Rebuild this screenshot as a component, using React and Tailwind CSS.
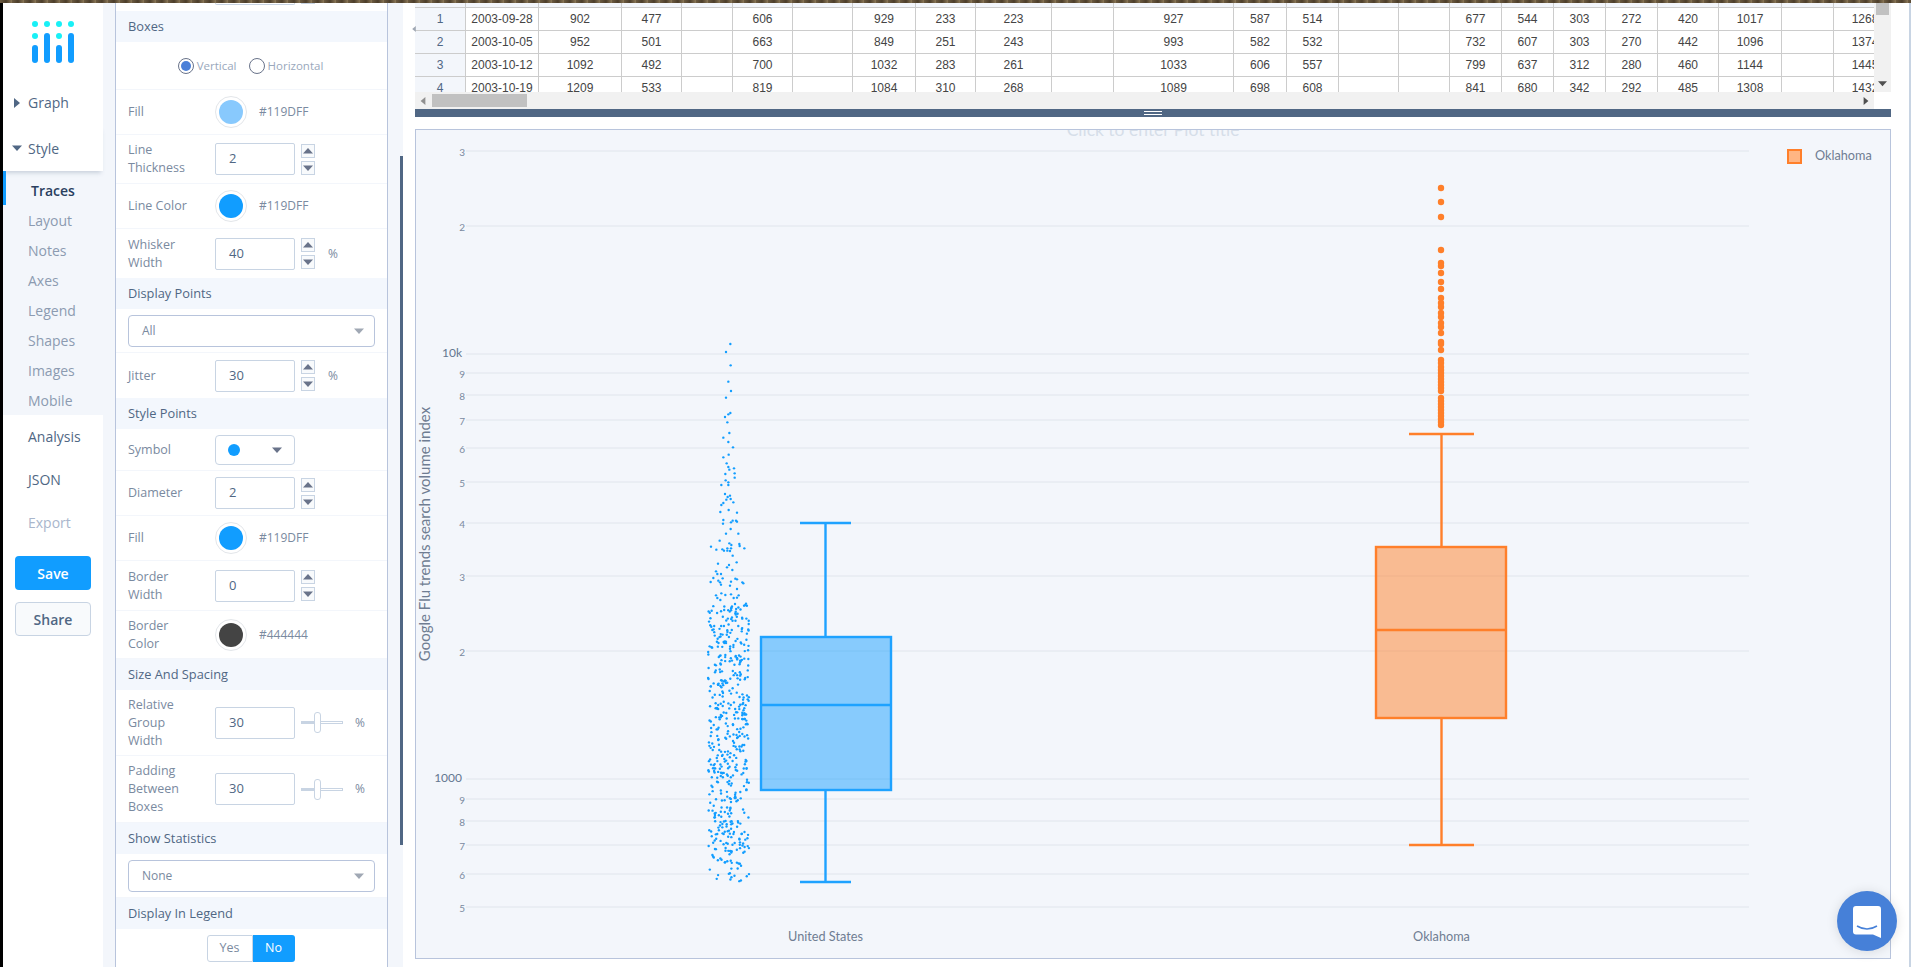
const colWidths = [
  "w-[51px]", "w-[73px]", "w-[83px]", "w-[60px]", "w-[51px]", "w-[60px]", "w-[60px]", "w-[63px]",
  "w-[60px]", "w-[76px]", "w-[62px]", "w-[120px]", "w-[53px]", "w-[52px]", "w-[60px]", "w-[51px]",
  "w-[52px]", "w-[52px]", "w-[52px]", "w-[52px]", "w-[61px]", "w-[63px]", "w-[52px]", "w-[63px]",
];

const tableRows = [
  ["1", "2003-09-28", "902", "477", "", "606", "", "929", "233", "223", "", "927", "587", "514", "", "", "677", "544", "303", "272", "420", "1017", "", "1268"],
  ["2", "2003-10-05", "952", "501", "", "663", "", "849", "251", "243", "", "993", "582", "532", "", "", "732", "607", "303", "270", "442", "1096", "", "1374"],
  ["3", "2003-10-12", "1092", "492", "", "700", "", "1032", "283", "261", "", "1033", "606", "557", "", "", "799", "637", "312", "280", "460", "1144", "", "1445"],
  ["4", "2003-10-19", "1209", "533", "", "819", "", "1084", "310", "268", "", "1089", "698", "608", "", "", "841", "680", "342", "292", "485", "1308", "", "1432"],
];

const gridLines = [
  [151, "3"], [226, "2"], [354, "10k", true], [373, "9"], [395, "8"], [420, "7"], [448, "6"], [482, "5"], [523, "4"],
  [576, "3"], [651, "2"], [779, "1000", true], [799, "9"], [821, "8"], [845, "7"], [874, "6"], [907, "5"],
];

// top of the jitter cloud, read off the picture
const topPoints = [
  [991,72],[978,96],[992,136],[985,185],[993,213],[978,233],[991,279],[985,283],[975,291],[982,307],[988,339],[970,353],
  [985,366],[999,382],[986,404],[970,412],[980,430],[985,441],[1002,445],[988,449],[976,462],[1004,460],[1004,473],[977,481],
  [985,487],[964,495],[985,495],[975,522],[990,527],[983,531],[979,539],[992,537],[1000,547],[970,549],[964,555],[986,570],
  [961,576],[1011,578],[970,600],[998,602],[1008,602],[1011,605],[993,607],[969,611],[992,627],[978,641],[1015,641],[959,662],
  [988,670],[1018,672],[994,675],[1019,678],[933,680],[982,685],[993,685],[967,688],[1033,685],[949,689],[972,692],[982,692],
  [990,693],[998,707],[1010,727],[954,731],[987,735],[981,742],[997,750],[948,754],[952,762],[963,762],[940,774],[1006,776],
  [1011,778],[955,782],[968,775],[932,786],[960,787],[993,785],[1027,787],[1030,790],[963,794],[990,797],[1011,807],[964,820],
  [948,826],[993,823],[976,825],[1016,826],[1011,833],[952,834],[961,840],[1001,834],[1005,852],[1038,851],
].map(([u, v]) => [400 + u / 3, 320 + v / 3]);

let seed = 20031;
const rand = () => {
  seed = (seed * 16807) % 2147483647;
  return seed / 2147483647;
};

const usPoints = [...topPoints];
for (let i = 0; i < 490; i++) usPoints.push([708 + rand() * 41, 605 + rand() * 255]);
for (let i = 0; i < 24; i++) usPoints.push([708 + rand() * 41, 860 + rand() * 22]);

const okPoints = [188, 202, 217, 250, 263, 266, 273, 282, 289, 298, 303, 307, 313, 317, 323, 327, 333, 342, 344, 350, 360, 363];
for (let y = 367; y <= 392; y += 3) okPoints.push(y);
for (let y = 398; y <= 425; y += 3) okPoints.push(y);

const Triangle = ({ dir = "down", className = "" }) => (
  <svg viewBox="0 0 10 10" className={className} fill="currentColor">
    {dir === "down" && <path d="M0 2.5h10L5 8z" />}
    {dir === "up" && <path d="M0 7.5h10L5 2z" />}
    {dir === "right" && <path d="M2 0v10l6-5z" />}
  </svg>
);

const Spinner = () => (
  <div className="ml-[6px] flex flex-col gap-[3px]">
    <div className="w-[14px] h-[14px] border border-[#c8d4e3] bg-[#f8fafc] flex items-center justify-center text-[#69738a]">
      <Triangle dir="up" className="w-[10px] h-[10px]" />
    </div>
    <div className="w-[14px] h-[14px] border border-[#c8d4e3] bg-[#f8fafc] flex items-center justify-center text-[#69738a]">
      <Triangle className="w-[10px] h-[10px]" />
    </div>
  </div>
);

const Section = ({ title }) => (
  <div className="h-[31px] bg-[#f3f7fd] pl-[12px] flex items-center text-[12.8px] text-[#506784]">{title}</div>
);

const Row = ({ label, height, children, last }) => (
  <div className={`${height} flex items-center pl-[12px] ${last ? "" : "border-b border-[#f3f6fb]"}`}>
    <div className="w-[87px] pr-[21px] text-[12.5px] leading-[18px] text-[#7a8aa0]">{label}</div>
    {children}
  </div>
);

const NumberInput = ({ value }) => (
  <div className="w-[80px] h-[32px] border border-[#c8d4e3] rounded-[2px] pl-[13px] flex items-center text-[13px] text-[#506784]">
    {value}
  </div>
);

const NumberRow = ({ label, value, unit, height, last }) => (
  <Row label={label} height={height} last={last}>
    <NumberInput value={value} />
    <Spinner />
    {unit && <span className="ml-[13px] text-[12px] text-[#7a8aa0]">{unit}</span>}
  </Row>
);

const ColorRow = ({ label, color, height, text = "#119DFF" }) => (
  <Row label={label} height={height}>
    <div className="w-[32px] h-[32px] rounded-full border border-[#e3e6ea] flex items-center justify-center">
      <div className={`w-[24px] h-[24px] rounded-full ${color}`} />
    </div>
    <span className="ml-[12px] text-[12px] text-[#7a8aa0]">{text}</span>
  </Row>
);

const SliderRow = ({ label, height }) => (
  <Row label={label} height={height}>
    <NumberInput value="30" />
    <div className="relative ml-[6px] w-[42px] h-[3px] border border-[#c8d4e3] bg-white">
      <div className="h-full w-[14px] bg-[#c8d4e3]" />
      <div className="absolute left-[12px] top-[-10px] w-[7px] h-[21px] rounded-[3px] border border-[#c8d4e3] bg-white" />
    </div>
    <span className="ml-[12px] text-[12px] text-[#7a8aa0]">%</span>
  </Row>
);

const SelectRow = ({ value, height }) => (
  <div className={`${height} flex items-center px-[12px] border-b border-[#f3f6fb]`}>
    <div className="w-[247px] h-[32px] border border-[#b8c4dc] rounded-[4px] pl-[13px] pr-[10px] flex items-center justify-between text-[12px] text-[#7a8aa0]">
      {value}
      <Triangle className="w-[10px] h-[10px] text-[#a0a8b4]" />
    </div>
  </div>
);

const Logo = () => (
  <svg viewBox="0 0 100 77" className="w-[100px] h-[77px] block">
    <g fill="#19f0f6">
      <circle cx="32" cy="21" r="3" />
      <circle cx="44" cy="21" r="3" />
      <circle cx="56" cy="21" r="3" />
      <circle cx="68" cy="21" r="3" />
      <circle cx="32" cy="33" r="3" />
      <circle cx="56" cy="33" r="3" />
    </g>
    <g fill="#119dff">
      <rect x="29" y="42" width="6" height="18" rx="3" />
      <rect x="41" y="30" width="6" height="30" rx="3" />
      <rect x="53" y="42" width="6" height="18" rx="3" />
      <rect x="65" y="30" width="6" height="30" rx="3" />
    </g>
  </svg>
);

const NavBar = () => (
  <div className="w-[100px] flex flex-col bg-white font-['Open_Sans',sans-serif] text-[14px] text-[#506784]">
    <Logo />
    <div className="h-[45px] flex items-center pl-[9px]">
      <Triangle dir="right" className="w-[10px] h-[10px] text-[#506784]" />
      <span className="ml-[6px]">Graph</span>
    </div>
    <div className="h-[46px] flex items-center pl-[9px] shadow-[0_4px_4px_-2px_rgba(80,103,132,0.25)] relative">
      <Triangle className="w-[10px] h-[10px] text-[#506784]" />
      <span className="ml-[6px]">Style</span>
    </div>
    <div className="h-[244px] bg-[#f3f6fb] text-[#8c9bb1]">
      <div className="h-[34px] pt-[4px] pl-[25px] border-l-[3px] border-[#119dff] flex items-center font-semibold text-[#2a3f5f]">
        Traces
      </div>
      {["Layout", "Notes", "Axes", "Legend", "Shapes", "Images", "Mobile"].map((item) => (
        <div key={item} className="h-[30px] pl-[25px] flex items-center">{item}</div>
      ))}
    </div>
    <div className="h-[43px] pl-[25px] flex items-center">Analysis</div>
    <div className="h-[43px] pl-[25px] flex items-center">JSON</div>
    <div className="h-[43px] pl-[25px] flex items-center text-[#a9b6cc]">Export</div>
    <div className="mt-[12px] mx-[12px] h-[34px] rounded-[4px] bg-[#119dff] text-white font-semibold flex items-center justify-center">Save</div>
    <div className="mt-[12px] mx-[12px] h-[34px] rounded-[4px] border border-[#c8d4e3] bg-[#f8fafc] font-semibold flex items-center justify-center">Share</div>
  </div>
);

const StylePanel = () => (
  <div className="w-[273px] border-x border-[#b8c4dc] bg-white font-['Open_Sans',sans-serif] overflow-hidden">
    <div className="h-[8px] flex pl-[99px]">
      <div className="w-[80px] h-[2px] border border-t-0 border-[#c8d4e3] rounded-b-[2px]" />
      <div className="ml-[6px] w-[14px] h-[1px] border-b border-[#c8d4e3]" />
    </div>
    <Section title="Boxes" />
    <div className="h-[48px] flex items-center justify-center pr-[2px] border-b border-[#f3f6fb] text-[11.5px] text-[#9aa8bc]">
      <div className="w-[16px] h-[16px] rounded-full border border-[#69738a] flex items-center justify-center">
        <div className="w-[10px] h-[10px] rounded-full bg-[#4a7fd8]" />
      </div>
      <span className="ml-[3px]">Vertical</span>
      <div className="ml-[12px] w-[16px] h-[16px] rounded-full border border-[#69738a]" />
      <span className="ml-[3px]">Horizontal</span>
    </div>
    <ColorRow label="Fill" color="bg-[#88c9fd]" height="h-[45px]" />
    <NumberRow label="Line Thickness" value="2" height="h-[49px]" />
    <ColorRow label="Line Color" color="bg-[#119dff]" height="h-[45px]" />
    <NumberRow label="Whisker Width" value="40" unit="%" height="h-[49px]" last />
    <Section title="Display Points" />
    <SelectRow value="All" height="h-[44px]" />
    <NumberRow label="Jitter" value="30" unit="%" height="h-[45px]" last />
    <Section title="Style Points" />
    <Row label="Symbol" height="h-[42px]">
      <div className="w-[80px] h-[30px] border border-[#c8d4e3] rounded-[4px] pl-[12px] pr-[12px] flex items-center justify-between">
        <div className="w-[12px] h-[12px] rounded-full bg-[#119dff]" />
        <Triangle className="w-[10px] h-[10px] text-[#69738a]" />
      </div>
    </Row>
    <NumberRow label="Diameter" value="2" height="h-[45px]" />
    <ColorRow label="Fill" color="bg-[#119dff]" height="h-[45px]" />
    <NumberRow label="Border Width" value="0" height="h-[50px]" />
    <ColorRow label="Border Color" color="bg-[#444444]" height="h-[48px]" text="#444444" />
    <Section title="Size And Spacing" />
    <SliderRow label="Relative Group Width" height="h-[66px]" />
    <SliderRow label="Padding Between Boxes" height="h-[67px]" />
    <Section title="Show Statistics" />
    <SelectRow value="None" height="h-[44px]" />
    <Section title="Display In Legend" />
    <div className="pt-[6px] flex justify-center pr-[2px] text-[12.5px]">
      <div className="w-[46px] h-[27px] border border-[#c8d4e3] rounded-l-[3px] flex items-center justify-center text-[#7a8aa0]">Yes</div>
      <div className="w-[42px] h-[27px] rounded-r-[3px] bg-[#119dff] flex items-center justify-center text-white">No</div>
    </div>
  </div>
);

const DataTable = () => (
  <div className="ml-[12px] mr-[18px] relative">
    <div className="flex">
      <div className="w-[1459px] h-[89px] overflow-hidden font-['Liberation_Sans',sans-serif] text-[12px] text-[#444444]">
        <table className="table-fixed w-[1482px] border-separate border-spacing-0">
          <colgroup>
            {colWidths.map((w, i) => (
              <col key={i} className={w} />
            ))}
          </colgroup>
          <tbody>
            <tr className="h-[5px]">
              {colWidths.map((w, i) => (
                <td key={i} className="p-0 h-[5px] bg-[#f3f6fb] border-r border-b border-[#cccccc]" />
              ))}
            </tr>
            {tableRows.map((row) => (
              <tr key={row[0]} className="h-[23px]">
                {row.map((cell, i) => (
                  <td
                    key={i}
                    className={`p-0 h-[23px] text-center whitespace-nowrap border-r border-b border-[#cccccc] ${i === 0 ? "bg-[#f3f6fb] text-[#506784]" : ""}`}
                  >
                    {cell}
                  </td>
                ))}
              </tr>
            ))}
          </tbody>
        </table>
      </div>
      <div className="w-[17px] h-[89px] bg-[#f1f1f1] flex flex-col items-center justify-between">
        <div className="w-[13px] h-[12px] bg-[#c1c1c1]" />
        <Triangle className="w-[9px] h-[9px] mb-[4px] text-[#505050]" />
      </div>
    </div>
    <div className="w-[1459px] h-[17px] bg-[#f1f1f1] flex items-center pl-[4px] pr-[4px]">
      <Triangle dir="right" className="w-[8px] h-[8px] rotate-180 text-[#909090]" />
      <div className="ml-[5px] w-[95px] h-[13px] bg-[#c1c1c1]" />
      <div className="flex-1" />
      <Triangle dir="right" className="w-[8px] h-[8px] text-[#505050]" />
    </div>
    <div className="absolute left-[-4px] top-[22px] text-[#a0a8b4]">
      <Triangle dir="right" className="w-[6px] h-[8px] rotate-180" />
    </div>
  </div>
);

const PlotChart = () => (
  <svg viewBox="416 130 1474 828" className="block w-full h-full" fontFamily="Lato, sans-serif">
    {gridLines.map(([y, label, major]) => (
      <g key={y}>
        <line x1="466" x2="1749" y1={y} y2={y} stroke="#e0e5ec" strokeWidth="1" />
        <text
          x={major ? 462 : 465}
          y={y + (major ? 3 : 5)}
          textAnchor="end"
          fontSize={major ? 12 : 10}
          fill={major ? "#647790" : "#7a8aa0"}
        >
          {label}
        </text>
      </g>
    ))}
    <text x="1153" y="136" textAnchor="middle" fontSize="17.5" fill="#d6dee9">Click to enter Plot title</text>
    <text transform="translate(430 534) rotate(-90)" textAnchor="middle" fontSize="15" fill="#6f7d92">
      Google Flu trends search volume index
    </text>

    {usPoints.map(([x, y], i) => (
      <circle key={i} cx={x} cy={y} r="1.2" fill="#119dff" />
    ))}
    <g stroke="#1ea2ff" strokeWidth="2.4" fill="none">
      <path d="M800 523H851M825.5 523V637M825.5 790V882M800 882H851" />
      <rect x="761" y="637" width="130" height="153" fill="#119dff" fillOpacity="0.48" />
      <path d="M761 705H891" />
    </g>

    {okPoints.map((y, i) => (
      <circle key={i} cx="1441" cy={y} r="3.2" fill="#ff7f2a" />
    ))}
    <g stroke="#ff7f2a" strokeWidth="2.4" fill="none">
      <path d="M1409 434H1474M1441.5 434V547M1441.5 718V845M1409 845H1474" />
      <rect x="1376" y="547" width="130" height="171" fill="#ff7f2a" fillOpacity="0.5" />
      <path d="M1376 630H1506" />
    </g>

    <text x="825.5" y="941" textAnchor="middle" fontSize="12.7" fill="#6f7d92">United States</text>
    <text x="1441.5" y="941" textAnchor="middle" fontSize="12.7" fill="#6f7d92">Oklahoma</text>

    <rect x="1788" y="150" width="13" height="13" fill="#ffb583" stroke="#ff7f2a" strokeWidth="2" />
    <text x="1815" y="160" fontSize="12.7" fill="#6f7d92">Oklahoma</text>
  </svg>
);

const ChatBubble = () => (
  <div className="absolute left-[1837px] top-[891px] w-[60px] h-[60px] rounded-full bg-[#4680d8] shadow-[0_1px_12px_rgba(0,0,0,0.12)]">
    <svg viewBox="0 0 60 60" className="w-[60px] h-[60px]">
      <path d="M19 15h22a3 3 0 0 1 3 3v29l-8-3.500H19a3 3 0 0 1-3-3V18a3 3 0 0 1 3-3z" fill="#ffffff" />
      <path d="M20 35Q30 41 40 35" fill="none" stroke="#4680d8" strokeWidth="1.500" />
    </svg>
  </div>
);

export default function App() {
  return (
    <div className="relative w-[1911px] h-[967px] overflow-hidden bg-white flex flex-col">
      <div className="h-[3px] shrink-0 bg-[repeating-linear-gradient(90deg,#6b5a40_0px,#4b3d2a_6px,#8a7757_12px)]" />
      <div className="flex flex-1 min-h-0">
        <div className="w-[3px] bg-black" />
        <NavBar />
        <div className="w-[12px] bg-[#f3f6fb]" />
        <StylePanel />
        <div className="w-[15px] bg-[#f3f6fb] flex justify-end">
          <div className="mt-[153px] w-[3px] h-[689px] bg-[#506784]" />
        </div>
        <div className="flex-1 flex flex-col min-w-0">
          <DataTable />
          <div className="ml-[12px] mr-[18px] h-[8px] bg-[#506784] flex flex-col items-center justify-center gap-[2px]">
            <div className="w-[18px] h-[1px] bg-white" />
            <div className="w-[18px] h-[1px] bg-white" />
          </div>
          <div className="mt-[12px] ml-[12px] w-[1476px] h-[830px] border border-[#b8c4dc] bg-[#f3f6fb] overflow-hidden">
            <PlotChart />
          </div>
        </div>
        <div className="w-[2px] bg-[#c8d4e3]" />
      </div>
      <ChatBubble />
    </div>
  );
}
